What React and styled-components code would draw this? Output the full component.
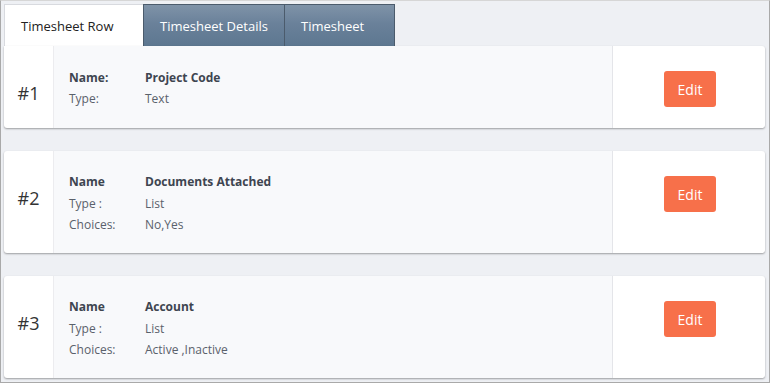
import React from "react";
import styled, { createGlobalStyle } from "styled-components";

const GlobalStyle = createGlobalStyle`
  html, body {
    margin: 0;
    padding: 0;
    background: #ffffff;
  }
  * {
    box-sizing: border-box;
  }
`;

const rows = [
  { num: 1, name: "Name:", value: "Project Code", typeLabel: "Type:", type: "Text" },
  { num: 2, name: "Name", value: "Documents Attached", typeLabel: "Type :", type: "List", choices: "No,Yes" },
  { num: 3, name: "Name", value: "Account", typeLabel: "Type :", type: "List", choices: "Active ,Inactive" },
];

const tabs = ["Timesheet Row", "Timesheet Details", "Timesheet"];
const tabWidths = [140, 142, 111];

function App() {
  return (
    <>
      <GlobalStyle />
      <Frame>
        <TabBar>
          {tabs.map((t, i) => (
            <Tab key={t} active={i === 0} width={tabWidths[i]}>
              {t}
            </Tab>
          ))}
        </TabBar>
        <List>
          {rows.map((r) => (
            <Card key={r.num} first={r.num === 1}>
              <NumCol>#{r.num}</NumCol>
              <InfoCol>
                <InfoRow>
                  <Label bold>{r.name}</Label>
                  <Value bold>{r.value}</Value>
                </InfoRow>
                <InfoRow>
                  <Label>{r.typeLabel}</Label>
                  <Value>{r.type}</Value>
                </InfoRow>
                {r.choices && (
                  <InfoRow>
                    <Label>Choices:</Label>
                    <Value>{r.choices}</Value>
                  </InfoRow>
                )}
              </InfoCol>
              <ActionCol>
                <EditButton type="button">Edit</EditButton>
              </ActionCol>
            </Card>
          ))}
        </List>
      </Frame>
    </>
  );
}

export default App;

const Frame = styled.div`
  width: 770px;
  height: 383px;
  border: 1px solid #a9a9a9;
  border-top-color: #d6d6d6;
  background: #eef0f4;
  padding: 3px 4px 0 3px;
  font-family: "Open Sans", "Noto Sans", sans-serif;
  overflow: hidden;
`;

const TabBar = styled.div`
  display: flex;
  height: 42px;
`;

const Tab = styled.div`
  width: ${(p) => p.width}px;
  display: flex;
  align-items: center;
  padding: 1px 0 0 16px;
  font-size: 13px;
  color: ${(p) => (p.active ? "#222" : "#ffffff")};
  background: ${(p) =>
    p.active ? "#ffffff" : "linear-gradient(#7f93a8 0%, #6a819a 45%, #5d7790 100%)"};
  border: 1px solid ${(p) => (p.active ? "#d8dadf" : "#4b5b6c")};
  border-bottom: none;
  margin-left: ${(p) => (p.active ? "0" : "-1px")};
`;

const List = styled.div`
  display: flex;
  flex-direction: column;
  gap: 23px;
`;

const Card = styled.div`
  display: flex;
  width: 761px;
  height: ${(p) => (p.first ? 82 : 102)}px;
  background: #ffffff;
  border-radius: ${(p) => (p.first ? "0 3px 3px 3px" : "3px")};
  box-shadow: 0 1px 2px rgba(0, 0, 0, 0.35);
  overflow: hidden;
`;

const NumCol = styled.div`
  width: 50px;
  display: flex;
  justify-content: center;
  align-items: flex-start;
  padding-top: 35px;
  font-size: 18px;
  line-height: 24px;
  color: #333;
  border-right: 1px solid #ececef;
`;

const InfoCol = styled.div`
  width: 559px;
  background: #f8f9fb;
  display: flex;
  flex-direction: column;
  justify-content: center;
  padding: 2px 0 0 15px;
  border-right: 1px solid #e4e5e9;
`;

const InfoRow = styled.div`
  display: flex;
  height: 21.5px;
  align-items: center;
  font-size: 12px;
`;

const Label = styled.span`
  width: 76px;
  color: ${(p) => (p.bold ? "#3e4550" : "#5a616b")};
  font-weight: ${(p) => (p.bold ? 700 : 400)};
`;

const Value = styled.span`
  color: ${(p) => (p.bold ? "#3e4550" : "#5a616b")};
  font-weight: ${(p) => (p.bold ? 700 : 400)};
`;

const ActionCol = styled.div`
  flex: 1;
  display: flex;
  align-items: flex-start;
  justify-content: center;
  padding-top: 25px;
`;

const EditButton = styled.button`
  width: 52px;
  height: 36px;
  border: none;
  border-radius: 3px;
  background: #f7704a;
  color: #ffffff;
  font-family: "Open Sans", "Noto Sans", sans-serif;
  font-size: 14px;
  cursor: pointer;
  margin-left: 2px;
`;
